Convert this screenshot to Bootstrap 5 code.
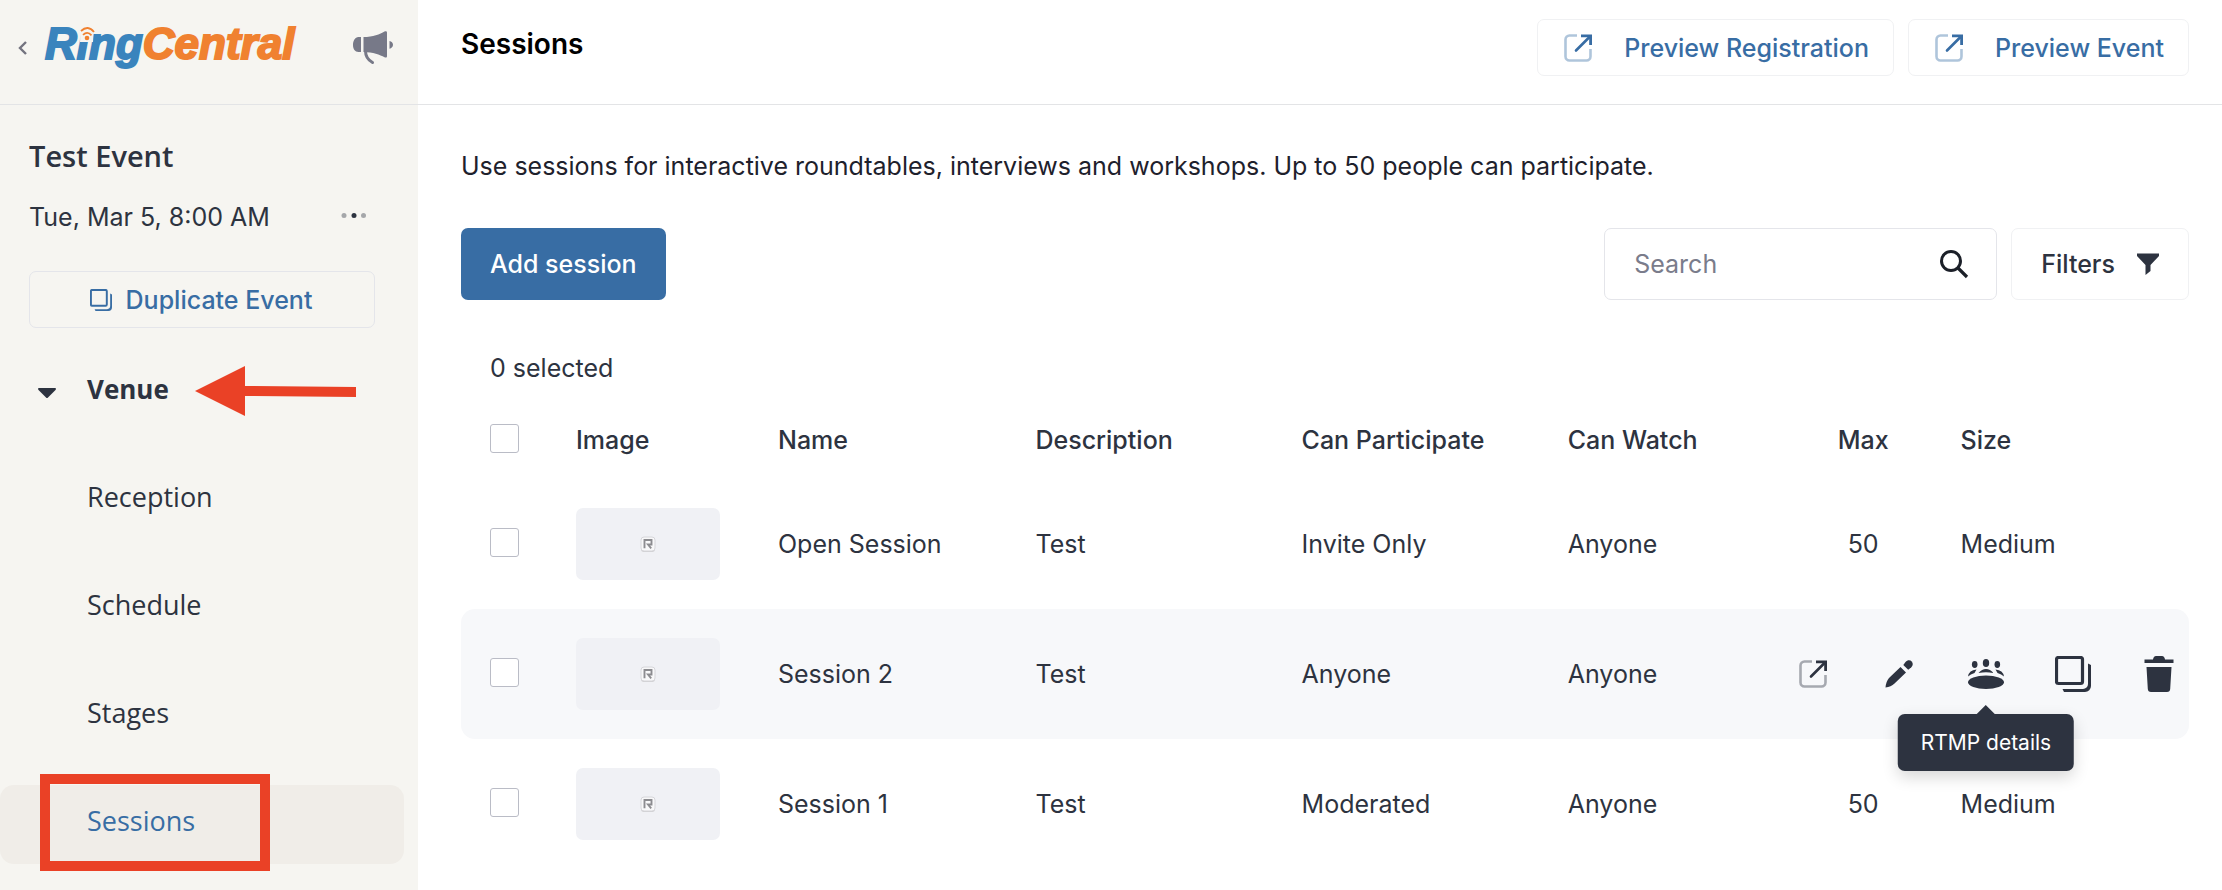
<!DOCTYPE html>
<html lang="en">
<head>
<meta charset="utf-8">
<meta name="viewport" content="width=device-width, initial-scale=1">
<title>Sessions</title>
<link href="https://cdn.jsdelivr.net/npm/bootstrap@5.3.0/dist/css/bootstrap.min.css" rel="stylesheet">
<style>
  :root { --ink: #2d3340; --blue: #386da4; --line: #e4e5ea; --red: #ea4126; }
  body { font-family: Inter, "Liberation Sans", sans-serif; font-size: 25px; line-height: 32px; color: var(--ink); background: #fff; }
  svg { display: block; flex: none; }
  .btn { --bs-btn-font-size: 25px; --bs-btn-line-height: 32px; --bs-btn-font-weight: 500; --bs-btn-border-radius: 7px; --bs-btn-color: var(--ink); }
  .btn-line { --bs-btn-border-color: #f0f1f3; --bs-btn-padding-y: 12px; --bs-btn-color: var(--blue); height: 57px; }
  .btn-preview { padding-left: 26px; padding-right: 24px; gap: 32px; }

  /* Sidebar */
  .side { flex: 0 0 418px; background: #f6f5f1; }
  .brand { font: italic 700 44px/56px "Liberation Sans", Arial, sans-serif; -webkit-text-stroke: 2px currentColor; color: #f08130; text-decoration: none; margin-left: 16px; padding-bottom: 8px; }
  .brand .ring { color: #3a84bd; }
  .brand svg { position: absolute; left: 32px; top: 10px; }
  .event { padding: 31px 43px 0 29px; }
  .event h2 { font: 600 29px/40px "Open Sans", sans-serif; margin: 0 0 25px; }
  .dup { border-color: var(--line); margin-top: 38px; padding-right: 14px; gap: 14px; }
  .side-nav { padding: 25px 14px 0 0; gap: 29px; font: 400 27px/34px "Open Sans", sans-serif; }
  .side-nav .nav-link { display: flex; align-items: center; height: 79px; padding: 0 0 8px 87px; border-radius: 14px; color: var(--ink); }
  .side-nav .nav-link.active { background: #f0ede8; color: var(--blue); }
  .side-nav .parent { padding-left: 37px; font-weight: 700; font-size: 26px; }
  .parent .caret { margin-right: 30px; margin-top: 8px; }
  .parent .pointer { margin-left: 26px; margin-top: 4px; }
  .frame { position: absolute; left: 40px; top: -11px; width: 230px; height: 97px; border: 10px solid var(--red); pointer-events: none; }

  /* Main column */
  .page { padding: 0 33px 0 43px; }
  .top-bar { height: 105px; padding-bottom: 9px; border-bottom: 1px solid #e3e4e6; }
  .side .top-bar { padding-left: 17px; padding-right: 25px; }
  .top-bar h1 { font-size: 28px; line-height: 36px; font-weight: 600; color: #000; margin: 0; }
  .row-gap { gap: 14px; }
  .intro { margin: 45px 0 46px; color: #1e212c; }
  .btn-add { --bs-btn-bg: var(--blue); --bs-btn-color: #fff; --bs-btn-padding-x: 28px; height: 72px; }
  .search { height: 72px; width: 393px; border: 1px solid var(--line); border-radius: 7px; padding: 0 27px 0 29px; }
  .search input { min-width: 0; color: var(--ink); }
  .search input::placeholder { color: #7a7c8b; }
  .btn-filter { --bs-btn-border-color: #f0f1f3; --bs-btn-padding-x: 29px; height: 72px; gap: 22px; }
  .count { margin: 52px 0 17px; padding-left: 29px; }

  .grid { table-layout: fixed; margin: 0; border-collapse: separate; border-spacing: 0; color: var(--ink); }
  .grid th, .grid td { padding: 0; border: 0; vertical-align: middle; height: 130px; background: none; color: inherit; }
  .grid th { height: 78px; font-weight: 500; }
  .grid .pick { padding: 0 0 3px 29px; }
  .grid .form-check-input { display: block; width: 29px; height: 29px; margin: 0; border: 1px solid #babcc6; border-radius: 3px; background-color: #fff; }
  .grid .last { padding-left: 30px; }
  .grid .hot > td { background: #f7f8fa; }
  .grid .hot > td:first-child { border-radius: 14px 0 0 14px; }
  .grid .hot > td:last-child { border-radius: 0 14px 14px 0; padding-right: 12px; }
  .c-pick { width: 115px; } .c-pic { width: 202px; } .c-name { width: 14.9%; } .c-wide { width: 15.4%; } .c-watch { width: 13.2%; } .c-max { width: 7.8%; }
  .thumb { width: 144px; height: 72px; border-radius: 7px; background: #f0f1f5; }
  .acts { gap: 51px; }
  .act { width: 36px; height: 36px; padding: 0; border: 0; background: none; color: var(--ink); display: grid; place-items: center; position: relative; }
  .tip { position: absolute; top: 58px; left: 50%; transform: translateX(-50%); height: 57px; padding: 0 23px; border-radius: 7px; background: var(--ink); color: #fff; font-size: 21px; line-height: 57px; white-space: nowrap; box-shadow: 0 6px 16px rgba(0,0,0,.16); z-index: 2; }
  .tip::before { content: ""; position: absolute; left: 50%; top: -9px; margin-left: -9px; border: 9px solid transparent; border-top: 0; border-bottom-color: var(--ink); }
</style>
</head>
<body>
<svg width="0" height="0" class="position-absolute" aria-hidden="true">
  <symbol id="i-open" viewBox="0 0 28 28">
    <path d="M13 1.500H5.500a4 4 0 0 0-4 4v17a4 4 0 0 0 4 4h17a4 4 0 0 0 4-4V15" fill="none" stroke="currentColor" stroke-width="2.600" opacity=".4"/>
    <path d="M12 16.500 25.500 3" fill="none" stroke="currentColor" stroke-width="2.600" stroke-linecap="round"/>
    <path d="M17 .5h11v10.500h-2.800V3.300H17z" fill="currentColor"/>
    <path d="M22 1h5.500v5.500z" fill="currentColor"/>
  </symbol>
  <symbol id="i-copy" viewBox="0 0 36 36">
    <rect x="1.500" y="1.500" width="26" height="26" rx="2" fill="none" stroke="currentColor" stroke-width="3.200"/>
    <path d="M33 7.500 36 9v21a6 6 0 0 1-6 6H9l-1.500-3H28a5 5 0 0 0 5-5z" fill="currentColor"/>
  </symbol>
  <symbol id="i-mark" viewBox="0 0 20 20">
    <rect x="3" y="4" width="14" height="14" rx="3" fill="#bbb" opacity=".6"/>
    <rect x="3" y="3" width="14" height="14" rx="3" fill="#f8f8f9" stroke="#d6d6da" stroke-width="1"/>
    <path d="M6.500 14.200V6h7v4.500h-3.500l3.200 3.800" fill="none" stroke="#8c8c90" stroke-width="1.900"/>
  </symbol>
</svg>

<div class="d-flex min-vh-100">
  <aside class="side">
    <div class="top-bar d-flex align-items-center">
      <a href="#" aria-label="Back"><svg width="12" height="16" viewBox="0 0 12 16"><path d="M9 2 3 8l6 6" fill="none" stroke="#73737f" stroke-width="2.400"/></svg></a>
      <a href="#" class="brand position-relative text-nowrap"><span class="ring">Ring</span>Central<svg width="20" height="18" viewBox="0 0 20 18"><path d="M3.500 0H17l-1 16H3z" fill="#f6f5f1"/><g fill="none" stroke="#f08130" stroke-width="1.800"><path d="M4 5q7-6.500 13 1M6 8.800q4.500-4 8.500.5"/></g><circle cx="10" cy="12" r="2.300" fill="#f08130"/></svg></a>
      <button class="btn p-0 border-0 ms-auto" aria-label="Announcements"><svg width="40" height="34" viewBox="0 0 40 34" fill="#777988"><path d="M8 6v15H5.500C2 21 0 18 0 14s2-8 5.500-8zM10.500 6C20 6 27 3 31.500.4 33 0 34 .4 34 1.600v23.600c0 1.300-1 1.700-2.500 1C27 24 20 21 10.500 21zM36.500 10c2 .4 3.500 1.800 3.500 3.800s-1.500 3.600-3.500 4z"/><path d="M12.500 20c0 6 2.500 9 7 11.500" fill="none" stroke="#777988" stroke-width="3" stroke-linecap="round"/></svg></button>
    </div>
    <div class="event">
      <h2>Test Event</h2>
      <div class="d-flex align-items-center justify-content-between pe-2">
        <span>Tue, Mar 5, 8:00 AM</span>
        <button class="btn p-0 border-0" aria-label="More"><svg width="26" height="8" viewBox="0 0 26 8" fill="#2d3340"><circle cx="3" cy="2.500" r="2.500" opacity=".4"/><circle cx="13" cy="2.500" r="2.500"/><circle cx="22.500" cy="2.500" r="2.500" opacity=".4"/></svg></button>
      </div>
      <button class="btn btn-line dup w-100 d-flex align-items-center justify-content-center"><svg width="22" height="22"><use href="#i-copy"/></svg>Duplicate Event</button>
    </div>
    <nav class="side-nav nav flex-column flex-nowrap">
      <a class="nav-link parent" href="#"><svg class="caret" width="20" height="12" viewBox="0 0 20 12"><path d="M1.500 1h17q1 .8 0 2L11 10.500q-1 1-2 0L1.500 3q-1-1.200 0-2z" fill="#2d3340"/></svg>Venue<svg class="pointer" width="162" height="50" viewBox="0 0 162 50"><path d="M0 25 50 0v20l111 1v10L50 30v20z" fill="#ea4126"/></svg></a>
      <a class="nav-link" href="#">Reception</a>
      <a class="nav-link" href="#">Schedule</a>
      <a class="nav-link" href="#">Stages</a>
      <a class="nav-link active position-relative" href="#" aria-current="page">Sessions<span class="frame"></span></a>
    </nav>
  </aside>

  <main class="flex-grow-1">
    <header class="page top-bar pt-0 d-flex align-items-center row-gap">
      <h1 class="me-auto pb-2">Sessions</h1>
      <a href="#" class="btn btn-line btn-preview d-flex align-items-center"><svg width="28" height="28"><use href="#i-open"/></svg>Preview Registration</a>
      <a href="#" class="btn btn-line btn-preview d-flex align-items-center"><svg width="28" height="28"><use href="#i-open"/></svg>Preview Event</a>
    </header>
    <div class="page">
      <p class="intro">Use sessions for interactive roundtables, interviews and workshops. Up to 50 people can participate.</p>
      <div class="d-flex row-gap">
        <button class="btn btn-add me-auto">Add session</button>
        <div class="search d-flex align-items-center">
          <input type="search" class="border-0 p-0 flex-grow-1 bg-transparent" placeholder="Search" aria-label="Search sessions">
          <svg width="30" height="30" viewBox="0 0 30 30"><circle cx="12" cy="12" r="9.500" fill="none" stroke="#1b1f28" stroke-width="3"/><path d="m19 19 9 9" stroke="#1b1f28" stroke-width="3.200"/></svg>
        </div>
        <button class="btn btn-filter d-flex align-items-center">Filters<svg width="22" height="22" viewBox="0 0 22 22"><path d="M0 .5h22V3l-8.500 9v6L8.500 22V12L0 3z" fill="#2d3340"/></svg></button>
      </div>
      <p class="count">0 selected</p>
      <table class="table grid w-100">
        <colgroup><col class="c-pick"><col class="c-pic"><col class="c-name"><col class="c-wide"><col class="c-wide"><col class="c-watch"><col class="c-max"><col></colgroup>
        <thead>
          <tr><th class="pick"><input class="form-check-input" type="checkbox" aria-label="Select all"></th><th>Image</th><th>Name</th><th>Description</th><th>Can Participate</th><th>Can Watch</th><th class="text-center">Max</th><th class="last">Size</th></tr>
        </thead>
        <tbody>
          <tr><td class="pick"><input class="form-check-input" type="checkbox" aria-label="Select Open Session"></td><td><div class="thumb d-grid align-items-center justify-content-center"><svg width="20" height="20"><use href="#i-mark"/></svg></div></td><td>Open Session</td><td>Test</td><td>Invite Only</td><td>Anyone</td><td class="text-center">50</td><td class="last">Medium</td></tr>
          <tr class="hot"><td class="pick"><input class="form-check-input" type="checkbox" aria-label="Select Session 2"></td><td><div class="thumb d-grid align-items-center justify-content-center"><svg width="20" height="20"><use href="#i-mark"/></svg></div></td><td>Session 2</td><td>Test</td><td>Anyone</td><td>Anyone</td>
            <td colspan="2"><div class="acts d-flex justify-content-end">
              <button class="act" aria-label="Open"><svg width="28" height="28"><use href="#i-open"/></svg></button>
              <button class="act" aria-label="Edit"><svg width="28" height="28" viewBox="0 0 28 28" fill="currentColor"><path d="M.5 27.500Q1 21.500 4 18L15.500 7l5.500 5.500L9.500 23.500Q6 27 .5 27.500z"/><path d="M18.300 5 20.500 2c2-2.300 4.800-2 6.200-.6s1.600 4-.6 6L23.200 9.800z"/></svg></button>
              <button class="act" aria-describedby="rtmp"><svg width="36" height="30" viewBox="0 0 36 30" fill="currentColor"><ellipse cx="18" cy="23.200" rx="18" ry="6.800"/><ellipse cx="18" cy="4" rx="3.200" ry="4"/><ellipse cx="6.700" cy="5.500" rx="2.800" ry="3.400"/><ellipse cx="29.300" cy="5.500" rx="2.800" ry="3.400"/><path d="M10.500 14Q14 10 18 10t7.500 4Q18 12.600 10.500 14zM0 17.500Q1 11 8.500 10.500L6.500 14Q2.500 15 0 17.500zM36 17.500Q35 11 27.500 10.500l2 3.500Q33.500 15 36 17.500z"/></svg><span class="tip" id="rtmp" role="tooltip">RTMP details</span></button>
              <button class="act" aria-label="Duplicate"><svg width="36" height="36"><use href="#i-copy"/></svg></button>
              <button class="act" aria-label="Delete"><svg width="30" height="36" viewBox="0 0 30 36" fill="currentColor"><path d="M.5 3.500H9q.5-3.500 3-3.500h6q2.500 0 3 3.500h8.500V7H.5zM2.500 11h25l-1.300 22q-.2 3-3.200 3H7q-3 0-3.200-3z"/></svg></button>
            </div></td></tr>
          <tr><td class="pick"><input class="form-check-input" type="checkbox" aria-label="Select Session 1"></td><td><div class="thumb d-grid align-items-center justify-content-center"><svg width="20" height="20"><use href="#i-mark"/></svg></div></td><td>Session 1</td><td>Test</td><td>Moderated</td><td>Anyone</td><td class="text-center">50</td><td class="last">Medium</td></tr>
        </tbody>
      </table>
    </div>
  </main>
</div>
<script src="https://cdn.jsdelivr.net/npm/bootstrap@5.3.0/dist/js/bootstrap.bundle.min.js"></script>
</body>
</html>
